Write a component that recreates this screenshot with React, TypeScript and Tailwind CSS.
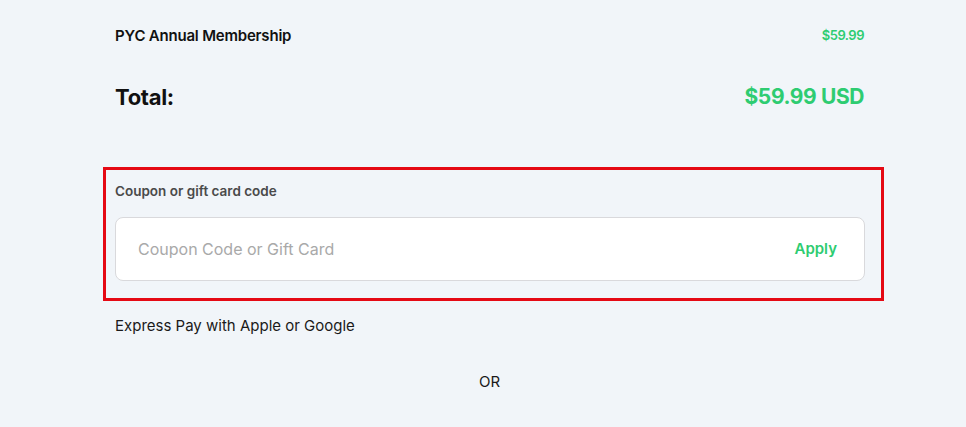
import React, { useState } from 'react';

const App = () => {
  const [code, setCode] = useState('');

  return (
    <div
      className="min-h-[427px] w-full bg-[#f1f5f9] text-[#111]"
      style={{ fontFamily: 'Inter, "Noto Sans", sans-serif' }}
    >
      <div className="ml-[115px] w-[749px] pt-[26px]">
        {/* line item */}
        <div className="flex items-center justify-between h-[20px]">
          <span className="text-[15px] font-semibold tracking-[-0.2px]">PYC Annual Membership</span>
          <span className="text-[13px] font-semibold text-[#2ecc71] tracking-[-0.5px]">$59.99</span>
        </div>

        {/* total */}
        <div className="flex items-center justify-between mt-[33px] h-[36px]">
          <span className="text-[22px] font-bold tracking-[-0.3px]">Total:</span>
          <span className="text-[21px] font-bold text-[#2ecc71] tracking-[-0.4px]">$59.99 USD</span>
        </div>
      </div>

      {/* coupon */}
      <div className="ml-[103px] w-[781px] mt-[52px] border-[3px] border-[#e50914] pl-[9px] pr-[16px] pt-[13px] pb-[17px]">
        <label className="block text-[13.5px] font-semibold text-[#4a4a4a] h-[16px] leading-[16px]">
          Coupon or gift card code
        </label>
        <div className="mt-[18px] flex items-center h-[64px] rounded-[8px] border border-[#d9d9dc] bg-white pl-[22px] pr-[27px]">
          <input
            value={code}
            onChange={(e) => setCode(e.target.value)}
            placeholder="Coupon Code or Gift Card"
            className="flex-1 bg-transparent outline-none text-[16px] text-[#222] placeholder:text-[#a9a9a9]"
          />
          <button className="text-[15px] font-semibold text-[#2ecc71]">Apply</button>
        </div>
      </div>

      <div className="ml-[115px] w-[749px]">
        <p className="mt-[15px] text-[15px] text-[#1a1a1a] h-[20px] leading-[20px]">
          Express Pay with Apple or Google
        </p>
        <p className="mt-[36px] text-center text-[15px] text-[#1a1a1a] h-[20px] leading-[20px]">OR</p>
      </div>
    </div>
  );
};

export default App;
